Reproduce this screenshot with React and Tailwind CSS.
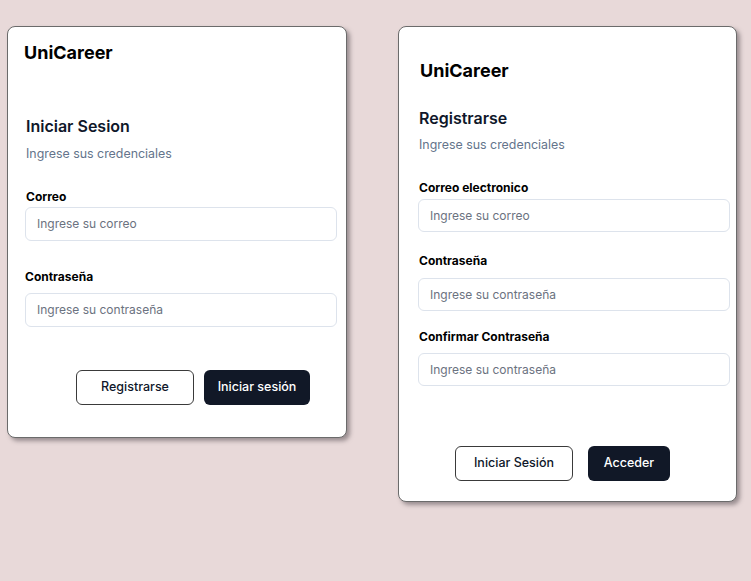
export default function App() {
  const font = { fontFamily: "Inter, 'Noto Sans', sans-serif" };
  return (
    <div
      className="w-[751px] h-[581px] bg-[#e8d9d9] flex items-start pl-[7px] pt-[26px] gap-[51px]"
      style={font}
    >
      {/* Login card */}
      <div className="w-[340px] h-[412px] bg-white border border-[#6b6b6b] rounded-[8px] shadow-[3px_3px_4px_rgba(90,80,85,0.55)] flex flex-col">
        <div className="ml-[16px] mt-[14px] text-[18px] leading-[24px] font-bold text-black">UniCareer</div>
        <div className="ml-[18px] mt-[49px] text-[16px] leading-[24px] font-semibold text-[#0f172a]">Iniciar Sesion</div>
        <div className="ml-[18px] mt-[6px] text-[12.4px] leading-[20px] text-[#64748b]">Ingrese sus credenciales</div>
        <div className="ml-[18px] mt-[25px] text-[12px] leading-[16px] font-bold text-black">Correo</div>
        <div className="ml-[17px] mt-[2px] w-[312px] h-[34px] border border-[#dde3ec] rounded-[6px] flex items-center px-[11px] text-[12px] text-[#6b7280]">
          Ingrese su correo
        </div>
        <div className="ml-[17px] mt-[28px] text-[12px] leading-[16px] font-bold text-black">Contraseña</div>
        <div className="ml-[17px] mt-[8px] w-[312px] h-[34px] border border-[#dde3ec] rounded-[6px] flex items-center px-[11px] text-[12px] text-[#6b7280]">
          Ingrese su contraseña
        </div>
        <div className="ml-[68px] mt-[43px] flex gap-[10px]">
          <div className="w-[118px] h-[35px] border border-[#3a3a3a] rounded-[6px] flex items-center justify-center text-[12.5px] font-medium text-[#0f172a]">
            Registrarse
          </div>
          <div className="w-[106px] h-[35px] bg-[#111827] rounded-[6px] flex items-center justify-center text-[12.5px] font-medium text-white">
            Iniciar sesión
          </div>
        </div>
      </div>

      {/* Register card */}
      <div className="w-[339px] h-[476px] bg-white border border-[#6b6b6b] rounded-[8px] shadow-[3px_3px_4px_rgba(90,80,85,0.55)] flex flex-col">
        <div className="ml-[21px] mt-[32px] text-[18px] leading-[24px] font-bold text-black">UniCareer</div>
        <div className="ml-[20px] mt-[23px] text-[16px] leading-[24px] font-semibold text-[#0f172a]">Registrarse</div>
        <div className="ml-[20px] mt-[5px] text-[12.4px] leading-[20px] text-[#64748b]">Ingrese sus credenciales</div>
        <div className="ml-[20px] mt-[25px] text-[12px] leading-[16px] font-bold text-black">Correo electronico</div>
        <div className="ml-[19px] mt-[3px] w-[312px] h-[33px] border border-[#dde3ec] rounded-[6px] flex items-center px-[11px] text-[12px] text-[#6b7280]">
          Ingrese su correo
        </div>
        <div className="ml-[20px] mt-[21px] text-[12px] leading-[16px] font-bold text-black">Contraseña</div>
        <div className="ml-[19px] mt-[9px] w-[312px] h-[33px] border border-[#dde3ec] rounded-[6px] flex items-center px-[11px] text-[12px] text-[#6b7280]">
          Ingrese su contraseña
        </div>
        <div className="ml-[20px] mt-[18px] text-[12px] leading-[16px] font-bold text-black">Confirmar Contraseña</div>
        <div className="ml-[19px] mt-[8px] w-[312px] h-[33px] border border-[#dde3ec] rounded-[6px] flex items-center px-[11px] text-[12px] text-[#6b7280]">
          Ingrese su contraseña
        </div>
        <div className="ml-[56px] mt-[60px] flex gap-[15px]">
          <div className="w-[118px] h-[35px] border border-[#3a3a3a] rounded-[6px] flex items-center justify-center text-[12.5px] font-medium text-[#0f172a]">
            Iniciar Sesión
          </div>
          <div className="w-[82px] h-[35px] bg-[#111827] rounded-[6px] flex items-center justify-center text-[12.5px] font-medium text-white">
            Acceder
          </div>
        </div>
      </div>
    </div>
  );
}
